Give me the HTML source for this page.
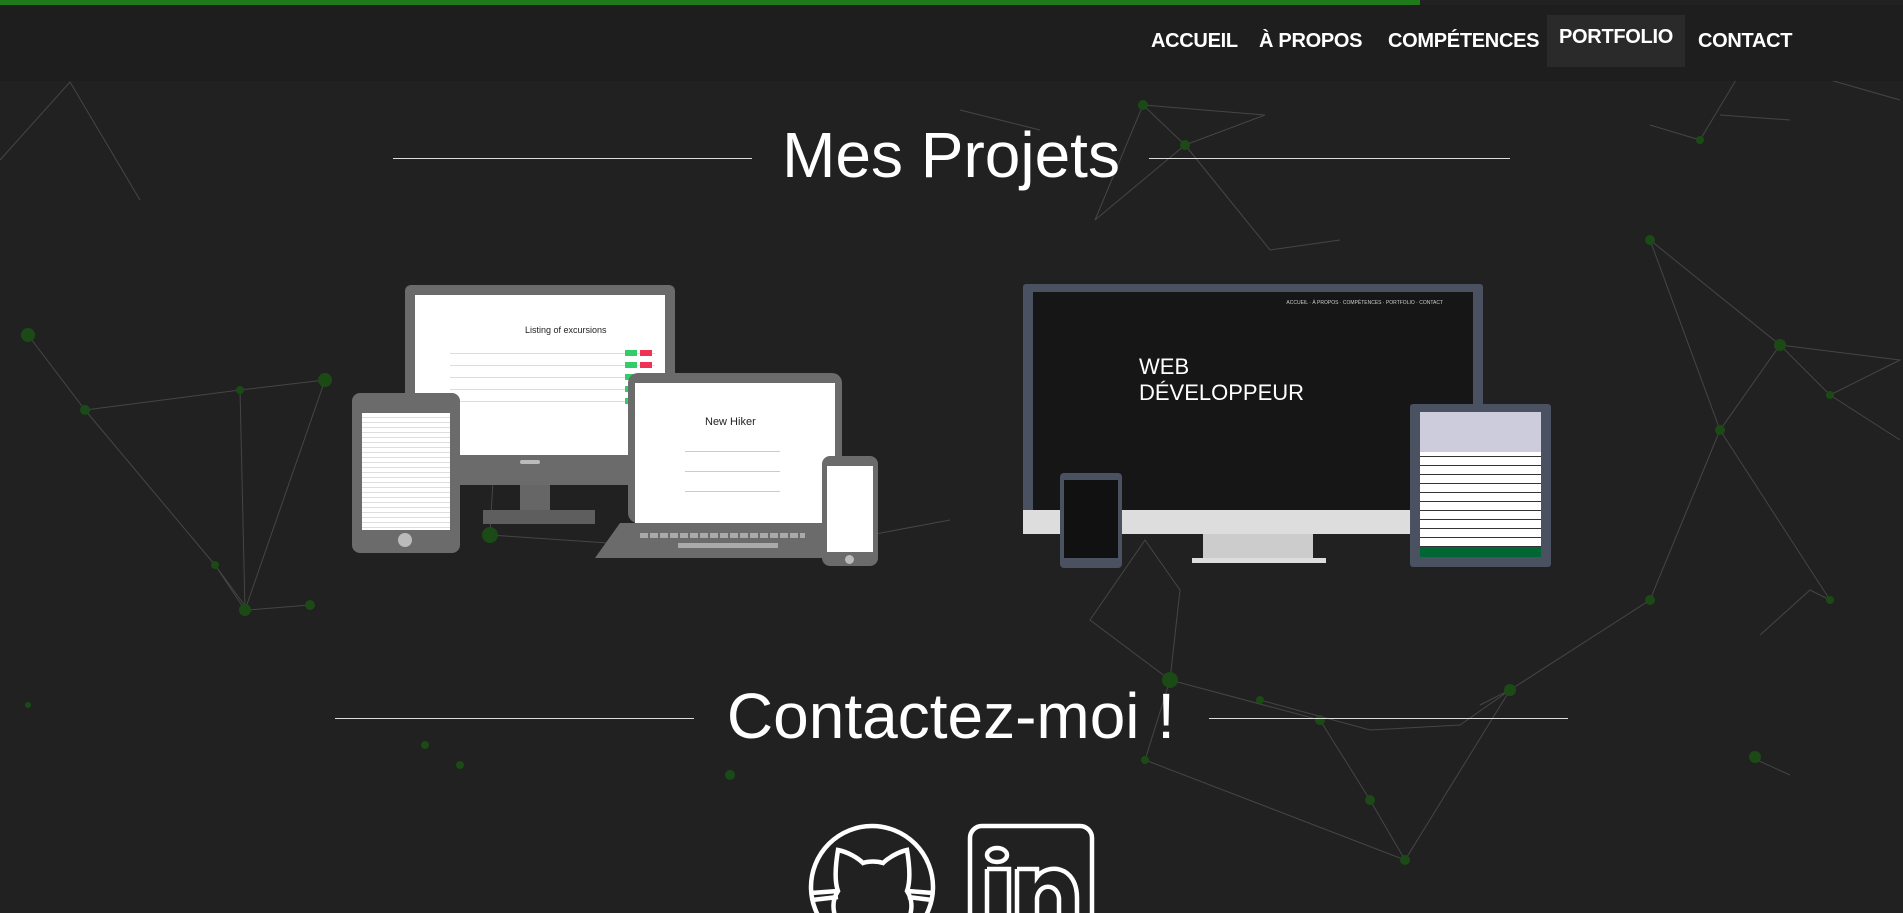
<!DOCTYPE html>
<html><head><meta charset="utf-8"><style>
*{margin:0;padding:0;box-sizing:border-box}
body{width:1903px;height:910px;overflow:hidden;background:#212121;font-family:"Liberation Sans",sans-serif;color:#fff;position:relative}
.bar{position:absolute;left:0;top:0;width:1420px;height:5px;background:#1f7a1a}
nav{position:absolute;left:0;top:5px;width:1903px;height:76px;background:#1e1e1e}
nav a{position:absolute;top:25px;font-size:20px;font-weight:bold;color:#fff;text-decoration:none;letter-spacing:-0.3px}
.act{position:absolute;left:1547px;top:10px;width:138px;height:52px;background:#2a2a2a}
h2{position:absolute;font-weight:normal;font-size:64px;text-align:center;width:600px;left:651px}
.ln{position:absolute;height:1px;background:#ddd}
.w{background:#fff;position:absolute}
</style></head><body>
<svg style="position:absolute;left:0;top:0" width="1903" height="910">
<g stroke="#555" stroke-width="1" fill="none" opacity=".7">
<path d="M0 160 L70 82 L140 200 L70 82 M28 335 L85 410 L240 390 L325 380 L245 610 L215 565 L248 610 L310 605 M85 410 L215 565 M240 390 L245 610"/>
<path d="M1143 105 L1185 145 L1265 115 L1143 105 L1095 220 L1185 145 M1185 145 L1270 250 L1340 240 M1650 240 L1780 345 L1830 395 L1900 440 M1650 240 L1720 430 L1780 345 M1720 430 L1650 600 L1510 690 L1480 705 M1510 690 L1405 860 L1370 800 M1720 430 L1830 600 M1830 395 L1900 360 L1780 345 M1830 600 L1810 590 L1760 635 M1757 760 L1790 775"/>
<path d="M1170 680 L1145 760 L1405 860 M1170 680 L1320 720 L1370 800 M1170 680 L1090 620 L1145 540 L1180 590 L1170 680 M1260 700 L1370 730 L1460 725 L1510 690 M1650 125 L1700 140 L1760 40 M1900 100 L1830 80"/>
<path d="M500 350 L490 535 L785 555 M790 550 L950 520 M960 110 L1040 130 M1720 115 L1790 120"/>
</g>
<g fill="#1b4a17">
<circle cx="28" cy="335" r="7"/><circle cx="85" cy="410" r="5"/><circle cx="325" cy="380" r="7"/><circle cx="240" cy="390" r="4"/><circle cx="245" cy="610" r="6"/><circle cx="215" cy="565" r="4"/><circle cx="310" cy="605" r="5"/><circle cx="1185" cy="145" r="5"/><circle cx="1143" cy="105" r="5"/><circle cx="1780" cy="345" r="6"/><circle cx="1650" cy="240" r="5"/><circle cx="1720" cy="430" r="5"/><circle cx="1830" cy="395" r="4"/><circle cx="1650" cy="600" r="5"/><circle cx="1510" cy="690" r="6"/><circle cx="1170" cy="680" r="8"/><circle cx="1370" cy="800" r="5"/><circle cx="1405" cy="860" r="5"/><circle cx="1755" cy="757" r="6"/><circle cx="1320" cy="720" r="5"/><circle cx="1145" cy="760" r="4"/><circle cx="460" cy="765" r="4"/><circle cx="730" cy="775" r="5"/><circle cx="490" cy="535" r="8"/><circle cx="1830" cy="600" r="4"/><circle cx="1700" cy="140" r="4"/><circle cx="1260" cy="700" r="4"/><circle cx="425" cy="745" r="4"/><circle cx="28" cy="705" r="3"/>
</g></svg>
<div class="bar"></div>
<nav><div class="act"></div>
<a style="left:1151px">ACCUEIL</a><a style="left:1259px">À PROPOS</a><a style="left:1388px">COMPÉTENCES</a><a style="left:1559px;top:21px">PORTFOLIO</a><a style="left:1698px">CONTACT</a>
</nav>
<div class="ln" style="left:393px;top:158px;width:359px"></div>
<div class="ln" style="left:1149px;top:158px;width:361px"></div>
<h2 style="top:118px">Mes Projets</h2>

<div style="position:absolute;left:405px;top:285px;width:270px;height:200px;background:#6b6b6b;border-radius:6px"></div>
<div class="w" style="left:415px;top:295px;width:250px;height:160px"><div style="position:absolute;left:110px;top:30px;color:#222;font-size:9px">Listing of excursions</div>
<div style="position:absolute;left:35px;top:50px;width:205px;height:60px;background:repeating-linear-gradient(#fff 0 8px,#ddd 8px 9px,#fff 9px 12px)"></div>
<div style="position:absolute;left:210px;top:55px;width:12px;height:55px;background:repeating-linear-gradient(#3c6 0 6px,#fff 6px 12px)"></div>
<div style="position:absolute;left:225px;top:55px;width:12px;height:55px;background:repeating-linear-gradient(#e35 0 6px,#fff 6px 12px)"></div></div>
<div style="position:absolute;left:520px;top:460px;width:20px;height:4px;background:#bbb;border-radius:2px"></div>
<div style="position:absolute;left:520px;top:485px;width:30px;height:25px;background:#666"></div>
<div style="position:absolute;left:483px;top:510px;width:112px;height:14px;background:#5e5e5e"></div>
<div style="position:absolute;left:628px;top:373px;width:214px;height:150px;background:#6b6b6b;border-radius:10px"></div>
<div class="w" style="left:635px;top:383px;width:200px;height:140px"><div style="position:absolute;left:70px;top:33px;color:#222;font-size:11px">New Hiker</div>
<div style="position:absolute;left:50px;top:58px;width:95px;height:62px;background:repeating-linear-gradient(#fff 0 10px,#ccc 10px 11px,#fff 11px 20px)"></div></div>
<div style="position:absolute;left:595px;top:523px;width:250px;height:35px;background:#6b6b6b;clip-path:polygon(10% 0,100% 0,100% 100%,0 100%)"></div>
<div style="position:absolute;left:640px;top:533px;width:165px;height:5px;background:repeating-linear-gradient(90deg,#aaa 0 8px,#6b6b6b 8px 10px)"></div>
<div style="position:absolute;left:678px;top:543px;width:100px;height:5px;background:#aaa"></div>
<div style="position:absolute;left:352px;top:393px;width:108px;height:160px;background:#6b6b6b;border-radius:8px"></div>
<div class="w" style="left:362px;top:413px;width:88px;height:117px;background:repeating-linear-gradient(#fff 0 4px,#ddd 4px 5px)"></div>
<div style="position:absolute;left:398px;top:533px;width:14px;height:14px;border-radius:50%;background:#bbb"></div>
<div style="position:absolute;left:822px;top:456px;width:56px;height:110px;background:#6b6b6b;border-radius:8px"></div>
<div class="w" style="left:827px;top:466px;width:46px;height:86px"></div>
<div style="position:absolute;left:845px;top:555px;width:9px;height:9px;border-radius:50%;background:#bbb"></div>

<div style="position:absolute;left:1023px;top:284px;width:460px;height:250px;background:#4a5262;border-radius:3px"></div>
<div style="position:absolute;left:1033px;top:292px;width:440px;height:218px;background:#161616"><div style="position:absolute;left:106px;top:62px;font-size:22px;line-height:26px">WEB<br>DÉVELOPPEUR</div><div style="position:absolute;right:30px;top:8px;font-size:5px;color:#ccc">ACCUEIL · À PROPOS · COMPÉTENCES · PORTFOLIO · CONTACT</div></div>
<div style="position:absolute;left:1023px;top:510px;width:460px;height:24px;background:#ddd"></div>
<div style="position:absolute;left:1203px;top:534px;width:110px;height:24px;background:#ccc"></div>
<div style="position:absolute;left:1192px;top:558px;width:134px;height:5px;background:#ddd"></div>
<div style="position:absolute;left:1410px;top:404px;width:141px;height:163px;background:#4a5262;border-radius:3px"></div>
<div class="w" style="left:1420px;top:412px;width:121px;height:145px;background:repeating-linear-gradient(#fff 0 8px,#333 8px 9px)"><div style="position:absolute;left:0;top:0;width:121px;height:40px;background:#ccd"></div><div style="position:absolute;left:0;bottom:0;width:121px;height:10px;background:#063"></div></div>
<div style="position:absolute;left:1060px;top:473px;width:62px;height:95px;background:#4a5262;border-radius:4px"></div>
<div style="position:absolute;left:1064px;top:480px;width:54px;height:78px;background:#111"></div>

<div class="ln" style="left:335px;top:718px;width:359px"></div>
<div class="ln" style="left:1209px;top:718px;width:359px"></div>
<h2 style="top:679px">Contactez-moi !</h2>

<svg style="position:absolute;left:808px;top:823px" width="132" height="90" fill="none" stroke="#fff" stroke-width="4.5">
<circle cx="64" cy="64" r="61"/>
<path d="M42 112 C24 100 22 80 30 68 C27 60 27 45 30 27 C40 29 50 35 55 40 C61 38 69 38 75 40 C80 35 90 29 99 27 C102 45 102 60 99 68 C107 80 105 100 86 112"/>
<path d="M3 70 L30 68 M4 77 L30 74 M125 70 L100 68 M124 77 L100 74"/>
</svg>
<svg style="position:absolute;left:967px;top:823px" width="130" height="90" fill="none" stroke="#fff" stroke-width="4.5">
<rect x="3" y="3" width="122" height="122" rx="12"/>
<ellipse cx="30" cy="32" rx="10" ry="7"/>
<path d="M20 46 L42 46 L42 130 M20 46 L20 130 M50 46 L70 46 L70 54 C80 40 110 42 110 75 L110 130 M50 46 L50 130 M70 130 L70 75 C72 60 90 60 92 75 L92 130"/>
</svg>
</body></html>
